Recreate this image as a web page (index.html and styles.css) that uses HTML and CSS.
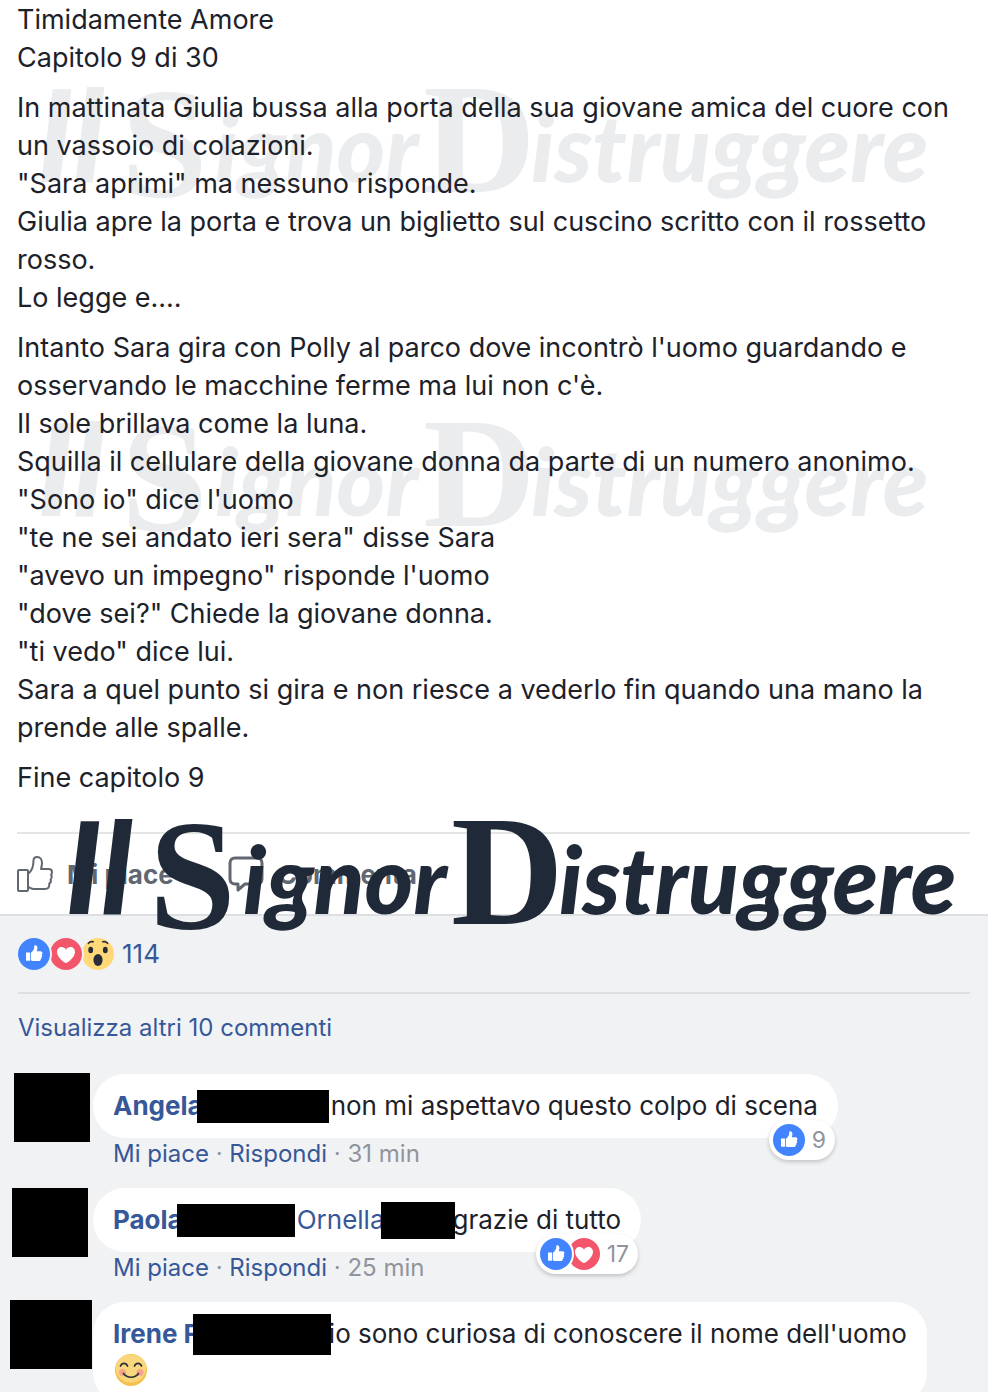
FILE: index.html
```html
<!DOCTYPE html>
<html lang="it">
<head>
  <meta charset="UTF-8">
  <meta name="viewport" content="width=device-width, initial-scale=1.0">
  <title>Timidamente Amore</title>
  <link rel="stylesheet" href="styles.css">
</head>
<body>
  <!-- shared shapes -->
  <svg class="defs" aria-hidden="true">
    <symbol id="thumb" viewBox="0 0 32 32">
      <path fill="#fff" d="M8 14.6h3.6c.4 0 .6.2.6.6V22c0 .4-.2.7-.6.7H8.6c-.4 0-.6-.3-.6-.7zM13 14.600c1.600-1.200 2.800-2.800 3.200-4.600.1-1.200-.3-2.800 1-2.800 1.600 0 2.400 1.600 2.200 3.200l-.6 2.800h3.600c1.200 0 2 .8 2 1.800 0 .8-.4 1.200-.8 1.500.4.4.7.8.6 1.400-.1.700-.4 1-.9 1.300.2.400.3.800.1 1.300-.2.500-.6.700-.9.900.1 1-.6 1.700-1.800 1.700h-4.200c-1.600 0-2.400-.4-3.500-.7z"/>
    </symbol>
    <symbol id="heart" viewBox="0 0 32 32">
      <path fill="#fff" d="M16 25c-1.500 0-9-5.400-9-10.900C7 11 9 9 11.600 9c1.900 0 3.500 1 4.400 2.700C16.900 10 18.500 9 20.400 9 23 9 25 11 25 14.100 25 19.600 17.500 25 16 25z"/>
    </symbol>
    <symbol id="wow" viewBox="0 0 32 32">
      <g fill="#262c38">
        <ellipse cx="8.700" cy="12" rx="2.400" ry="3.200"/>
        <ellipse cx="23.300" cy="12" rx="2.400" ry="3.200"/>
        <ellipse cx="16" cy="22" rx="4.600" ry="6"/>
      </g>
      <path fill="none" stroke="#262c38" stroke-width="1.600" stroke-linecap="round" d="M6.400 5.300c1.200-1.300 3-1.900 4.800-1.500M20.800 3.800c1.800-.4 3.600.2 4.800 1.500"/>
    </symbol>
  </svg>

  <article class="post">
    <svg class="mark mark-pale" aria-hidden="true">
      <text class="brush tall" x="8" y="104">Il</text>
      <text class="initial" x="92" y="118">S</text>
      <text class="brush" x="186" y="104">ignor</text>
      <text class="initial" x="394" y="114">D</text>
      <text class="brush" x="502" y="104">istruggere</text>
    </svg>
    <svg class="mark mark-pale mark-2" aria-hidden="true">
      <text class="brush tall" x="8" y="104">Il</text>
      <text class="initial" x="92" y="118">S</text>
      <text class="brush" x="186" y="104">ignor</text>
      <text class="initial" x="394" y="114">D</text>
      <text class="brush" x="502" y="104">istruggere</text>
    </svg>

    <div class="story">
      <p>Timidamente Amore<br>Capitolo 9 di 30</p>
      <p>In mattinata Giulia bussa alla porta della sua giovane amica del cuore con un vassoio di colazioni.<br>
        "Sara aprimi" ma nessuno risponde.<br>
        Giulia apre la porta e trova un biglietto sul cuscino scritto con il rossetto rosso.<br>
        Lo legge e....</p>
      <p>Intanto Sara gira con Polly al parco dove incontrò l'uomo guardando e osservando le macchine ferme ma lui non c'è.<br>
        Il sole brillava come la luna.<br>
        Squilla il cellulare della giovane donna da parte di un numero anonimo.<br>
        "Sono io" dice l'uomo<br>
        "te ne sei andato ieri sera" disse Sara<br>
        "avevo un impegno" risponde l'uomo<br>
        "dove sei?" Chiede la giovane donna.<br>
        "ti vedo" dice lui.<br>
        Sara a quel punto si gira e non riesce a vederlo fin quando una mano la prende alle spalle.</p>
      <p>Fine capitolo 9</p>
    </div>

    <div class="actions">
      <button type="button" class="action">
        <svg width="36" height="36" viewBox="0 0 36 36" fill="none" stroke="#616770" stroke-width="2" stroke-linejoin="round">
          <rect x="1" y="14" width="10" height="21" rx="1"/>
          <path d="M11 18c4-3 5.500-7 5.500-13.500C16.500 2 18 1 20 1c3.500 0 5 3 5 6 0 2-.5 4-1 6h7.500c2.500 0 3.500 1.500 3.500 3.200 0 1.300-.5 2-1 2.600 1 1 1 3.400-.4 4.700.6 1.500.2 3.200-1.400 4.100.5 3.400-1 5.400-4.200 5.400H17c-3 0-4-1.500-6-2"/>
        </svg>
        <span>Mi piace</span>
      </button>
      <button type="button" class="action">
        <svg width="36" height="36" viewBox="0 0 36 36" fill="none" stroke="#616770" stroke-width="3" stroke-linejoin="round">
          <path d="M7 2h22c3 0 5 2 5 5v16c0 3-2 5-5 5H17l-7 6v-6H7c-3 0-5-2-5-5V7c0-3 2-5 5-5z"/>
        </svg>
        <span>Commenta</span>
      </button>
    </div>
    <svg class="mark mark-dark" role="img" aria-label="Il Signor Distruggere">
      <text class="brush tall" x="8" y="104">Il</text>
      <text class="initial" x="92" y="118">S</text>
      <text class="brush" x="186" y="104">ignor</text>
      <text class="initial" x="394" y="114">D</text>
      <text class="brush" x="502" y="104">istruggere</text>
    </svg>
  </article>

  <section class="feedback">
    <div class="reactions">
      <svg class="face like"><use href="#thumb"/></svg>
      <svg class="face love"><use href="#heart"/></svg>
      <svg class="face wow"><use href="#wow"/></svg>
      <a href="#" class="total">114</a>
    </div>

    <a href="#" class="more">Visualizza altri 10 commenti</a>

    <ul class="comments">
      <li class="comment">
        <div class="avatar"></div>
        <div class="body">
          <div class="bubble">
            <div class="line">
              <a href="#" class="name">Angela</a><span class="bar"></span><span>non mi aspettavo questo colpo di scena</span>
            </div>
            <div class="pill">
              <svg class="face like"><use href="#thumb"/></svg>
              <span>9</span>
            </div>
          </div>
          <div class="meta"><a href="#">Mi piace</a> · <a href="#">Rispondi</a> · 31 min</div>
        </div>
      </li>
      <li class="comment">
        <div class="avatar avatar-paola"></div>
        <div class="body">
          <div class="bubble">
            <div class="line">
              <a href="#" class="name">Paola</a><span class="bar bar-paola"></span><a href="#">Ornella</a><span class="bar bar-ornella"></span><span>grazie di tutto</span>
            </div>
            <div class="pill">
              <svg class="face like"><use href="#thumb"/></svg>
              <svg class="face love"><use href="#heart"/></svg>
              <span>17</span>
            </div>
          </div>
          <div class="meta"><a href="#">Mi piace</a> · <a href="#">Rispondi</a> · 25 min</div>
        </div>
      </li>
      <li class="comment">
        <div class="avatar avatar-irene"></div>
        <div class="body">
          <div class="bubble">
            <div class="line">
              <a href="#" class="name">Irene F</a><span class="bar bar-irene"></span><span>io sono curiosa di conoscere il nome dell'uomo</span>
            </div>
            <svg class="smile" viewBox="0 0 32 32" role="img" aria-label="sorriso">
              <circle cx="16" cy="16" r="16" fill="#f5c04b"/>
              <ellipse cx="16" cy="14.500" rx="15" ry="14" fill="#f9d77d"/>
              <circle cx="7.500" cy="18.500" r="3.600" fill="#f7a58c"/>
              <circle cx="25" cy="18.500" r="3.600" fill="#f7a58c"/>
              <path fill="none" stroke="#2b303b" stroke-width="1.700" stroke-linecap="round" d="M5.500 12c1.500-3.500 5.500-3.500 7 0M19.500 12c1.500-3.500 5.500-3.500 7 0M8.500 19.500c3.500 5 11.500 5 15 0"/>
            </svg>
          </div>
        </div>
      </li>
    </ul>
  </section>
</body>
</html>
```
FILE: styles.css
```css
body {
    margin: 0;
    height: 100vh;
    overflow: hidden;
    background-color: #f1f2f4;
    color: #1d2129;
    font-family: Inter, "Liberation Sans", sans-serif;
    font-size: 27px;
    line-height: 38px;
}
a {
    color: #365899;
    text-decoration: none;
}
.defs {
    position: absolute;
    width: 0;
    height: 0;
}

/* post */
.post {
    position: relative;
    padding: 1px 18px 0 17px;
    background-color: #fff;
    border-bottom: 2px solid #dddfe2;
}
.story {
    position: relative;
    padding-bottom: 35px;
    border-bottom: 2px solid #e5e5e5;
}
.story p {
    margin: 0 0 12px;
}
.story p:last-child {
    margin-bottom: 0;
}
.actions {
    display: flex;
    gap: 54px;
    height: 80px;
    align-items: center;
}
.action {
    display: flex;
    align-items: center;
    gap: 14px;
    padding: 0;
    border: 0;
    background: none;
    color: #616770;
    font-family: inherit;
    font-size: 26px;
    font-weight: 700;
}

/* wordmark laid over the post */
.mark {
    position: absolute;
    width: 904px;
    height: 180px;
    overflow: visible;
}
.mark-pale {
    left: 29px;
    top: 78px;
    fill: #ebecee;
}
.mark-2 {
    top: 412px;
}
.mark-dark {
    left: 57px;
    bottom: -76px;
    fill: #1f2937;
}
.brush {
    font-family: Lato, sans-serif;
    font-size: 93px;
    font-style: italic;
    font-weight: 900;
}
.tall {
    font-size: 128px;
}
.initial {
    font-family: "Liberation Serif", serif;
    font-size: 156px;
    font-weight: 700;
}

/* reactions and comments */
.feedback {
    padding: 0 18px;
}
.reactions {
    display: flex;
    align-items: center;
    height: 76px;
    border-bottom: 2px solid #dddfe2;
}
.face {
    position: relative;
    width: 32px;
    height: 32px;
    border-radius: 50%;
}
.like {
    z-index: 2;
    background-color: #4284ff;
    box-shadow: 0 0 0 2px #f1f2f4;
}
.love {
    z-index: 1;
    background-color: #f3556b;
    box-shadow: 0 0 0 2px #f1f2f4;
}
.wow {
    background-color: #ffd877;
}
.total {
    margin-left: 8px;
    font-size: 26px;
}
.more {
    display: block;
    margin: 15px 0 27px;
    font-size: 24px;
}
.comments {
    margin: 0;
    padding: 0;
    list-style: none;
}
.comment {
    display: flex;
    margin: 0 0 18px -4px;
}
.avatar {
    flex: none;
    width: 76px;
    height: 69px;
    margin: -1px 3px 0 0;
    background-color: #000;
}
.avatar-paola {
    margin: 0 5px 0 -2px;
}
.avatar-irene {
    width: 82px;
    margin: -2px 1px 0 -4px;
}
.bubble {
    position: relative;
    width: max-content;
    padding: 13px 20px;
    border-radius: 32px;
    background-color: #fff;
    font-size: 26px;
}
.line {
    display: flex;
    align-items: center;
    height: 38px;
}
.name {
    font-weight: 700;
}
/* blacked out surnames */
.bar {
    position: relative;
    width: 132px;
    height: 33px;
    margin: 0 2px 0 -6px;
    background-color: #000;
}
.bar-paola {
    width: 118px;
}
.bar-ornella {
    width: 74px;
    height: 37px;
    margin: 0 -2px 0 -4px;
}
.bar-irene {
    width: 138px;
    height: 41px;
    margin-right: -2px;
}
.smile {
    display: block;
    width: 32px;
    height: 32px;
    margin: 1px 0 5px 2px;
}
.meta {
    height: 32px;
    padding-left: 20px;
    color: #90949c;
    font-size: 24px;
    line-height: 32px;
}
.pill {
    position: absolute;
    right: 3px;
    bottom: -22px;
    display: flex;
    align-items: center;
    height: 40px;
    padding: 0 9px 0 4px;
    border-radius: 20px;
    background-color: #fff;
    box-shadow: 0 2px 4px rgba(0, 0, 0, 0.2);
    color: #90949c;
    font-size: 23px;
}
.pill .face {
    box-shadow: 0 0 0 2px #fff;
}
.pill .love {
    margin-left: -4px;
}
.pill span {
    margin-left: 7px;
}
```
